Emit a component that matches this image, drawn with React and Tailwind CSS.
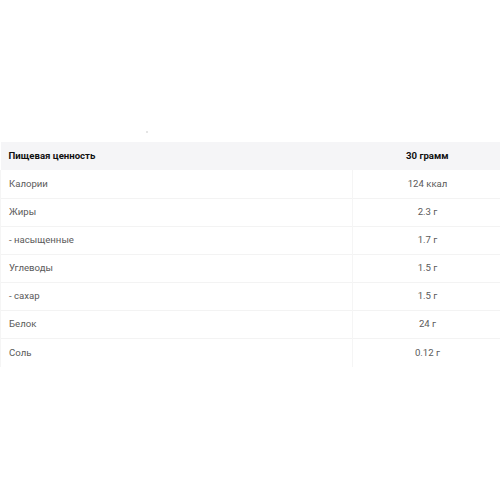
import React from "react";

const ROWS = [
  { name: "Калории", value: "124 ккал" },
  { name: "Жиры", value: "2.3 г" },
  { name: "- насыщенные", value: "1.7 г" },
  { name: "Углеводы", value: "1.5 г" },
  { name: "- сахар", value: "1.5 г" },
  { name: "Белок", value: "24 г" },
  { name: "Соль", value: "0.12 г" },
];

export default function App() {
  return (
    <div
      className="w-[500px] h-[500px] bg-white"
      style={{ fontFamily: "Roboto, 'Noto Sans', sans-serif" }}
    >
      {/* spacer with the stray dot */}
      <div className="h-[142px] flex items-end pb-[9px] pl-[146px]">
        <div className="w-[2px] h-[2px] rounded-full bg-[#dcdcdc]" />
      </div>

      <table className="w-full border-collapse text-[9.6px] leading-none">
        <thead>
          <tr className="h-[28px] bg-[#f5f5f7]">
            <th className="w-[352px] pl-[8px] text-left font-bold text-[#111]">
              Пищевая ценность
            </th>
            <th className="pl-[2px] text-center font-bold text-[#111]">30 грамм</th>
          </tr>
        </thead>
        <tbody>
          {ROWS.map((r, i) => (
            <tr
              key={r.name}
              className={
                i < ROWS.length - 1
                  ? "h-[28px] border-b border-[#f3f3f3]"
                  : "h-[29px]"
              }
            >
              <td className="pl-[8px] text-left text-[#5a5a5a] border-l border-r border-[#f5f5f5]">
                {r.name}
              </td>
              <td className="pl-[2px] text-center text-[#5a5a5a]">{r.value}</td>
            </tr>
          ))}
        </tbody>
      </table>
    </div>
  );
}
